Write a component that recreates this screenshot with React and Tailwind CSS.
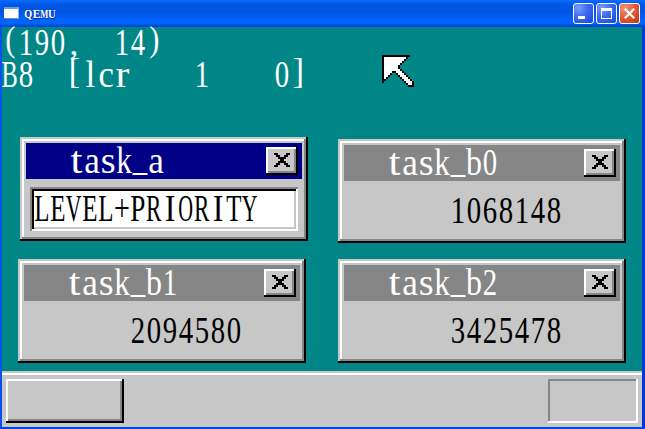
import React from "react";

// Horizontal stretch that fits each serif glyph into the 16px console cell.
const STRETCH = {
  "(": 0.95, ")": 0.95, "[": 1.05, "]": 1.05, ",": 1.1, "+": 0.88, _: 0.9,
  t: 1.35, a: 1.1, s: 1.2, k: 0.98, b: 1, l: 1.1, c: 1.08, r: 1.3,
  L: 0.78, E: 0.78, V: 0.68, P: 0.85, R: 0.72, I: 1, O: 0.64, T: 0.78, Y: 0.68, B: 0.76,
};

// Brackets and the underscore have a shorter body or a raised position.
const HEIGHT = { "(": 1.1, ")": 1.1, "[": 1.12, "]": 1.12, ",": 1 };
const SHIFT = { "(": -3, ")": -3, "[": -3, "]": -3, ",": 0, _: -2 };

function Mono({ text }) {
  return (
    <div className="flex h-8 whitespace-pre font-['Liberation_Serif',serif] text-[32px] leading-8">
      {[...text].map((ch, i) => (
        <span key={i} className="flex h-8 w-4 shrink-0 justify-center">
          <span
            className="block origin-[50%_27px]"
            style={{
              transform: `translateY(${SHIFT[ch] ?? 1}px) scale(${STRETCH[ch] ?? 0.9}, ${HEIGHT[ch] ?? 1.2})`,
            }}
          >
            {ch}
          </span>
        </span>
      ))}
    </div>
  );
}

function Bitmap({ rows, colors, className }) {
  return (
    <svg
      className={className}
      viewBox={`0 0 ${rows[0].length} ${rows.length}`}
      shapeRendering="crispEdges"
    >
      {rows.flatMap((row, y) =>
        [...row].map((c, x) =>
          colors[c] ? <rect key={`${x}-${y}`} x={x} y={y} width="1" height="1" fill={colors[c]} /> : null
        )
      )}
    </svg>
  );
}

const POINTER = [
  "**************..",
  "*OOOOOOOOOOO*...",
  "*OOOOOOOOOO*....",
  "*OOOOOOOOO*.....",
  "*OOOOOOOO*......",
  "*OOOOOOO*.......",
  "*OOOOOOO*.......",
  "*OOOOOOOO*......",
  "*OOOO**OOO*.....",
  "*OOO*..*OOO*....",
  "*OO*....*OOO*...",
  "*O*......*OOO*..",
  "**........*OOO*.",
  "*..........*OOO*",
  "............*OO*",
  ".............***",
];

const CROSS = [
  "@@....@@",
  ".@@..@@.",
  "..@@@@..",
  "...@@...",
  "..@@@@..",
  ".@@..@@.",
  "@@....@@",
];

function CloseButton() {
  return (
    <button className="flex h-7 w-8 items-start bg-[#c7c7c7] pt-[6px] pl-2 shadow-[inset_-2px_-2px_0_#000,inset_2px_2px_0_#fff,inset_-4px_-4px_0_#868686]">
      <Bitmap rows={CROSS} colors={{ "@": "#000" }} className="h-[14px] w-4 shrink-0" />
    </button>
  );
}

function TaskWindow({ title, active, place, children }) {
  return (
    <section
      className={`absolute h-[104px] w-72 bg-[#c7c7c7] p-[6px] shadow-[inset_-2px_-2px_0_#000,inset_2px_2px_0_#c7c7c7,inset_-4px_-4px_0_#868686,inset_4px_4px_0_#fff] ${place}`}
    >
      <header
        className={`flex h-9 justify-between pt-[2px] pr-1 pl-[42px] text-white ${active ? "bg-[#000086]" : "bg-[#868686]"}`}
      >
        <Mono text={title} />
        <div className="pt-[2px]">
          <CloseButton />
        </div>
      </header>
      {children}
    </section>
  );
}

function Count({ value }) {
  return (
    <div className="pt-[14px] pl-[106px] text-black">
      <Mono text={value} />
    </div>
  );
}

function FrameButton({ tone, children }) {
  return (
    <button className={`flex h-[21px] w-[21px] items-center justify-center rounded-[3px] border border-white ${tone}`}>
      {children}
    </button>
  );
}

const BLUE = "bg-[radial-gradient(circle_at_25%_20%,#7a9cf8_0%,#3c6af0_45%,#1746d8_100%)]";
const RED = "bg-[radial-gradient(circle_at_25%_20%,#f09478_0%,#e25a33_50%,#c2330c_100%)]";

export default function App() {
  return (
    <div className="flex h-[429px] w-[645px] flex-col overflow-hidden bg-[#0046ea]">
      <header className="flex h-[27px] shrink-0 items-start bg-[linear-gradient(to_bottom,#0a6cff_0px,#0058e6_4px,#0053e0_11px,#0060fa_19px,#0068ff_23px,#0048d8_26px,#003cc0_27px)] pt-[3px] pr-[5px] pl-1">
        <div className="mt-[4px] h-3 w-[15px] border-t-2 border-r border-b border-t-[#5f9fd0] border-r-[#8db0d8] border-b-[#6f8fc0] bg-white" />
        <h1 className="mt-[3px] ml-[5px] flex font-['Liberation_Serif',serif] text-[13.5px] leading-4 font-bold text-white [text-shadow:1px_1px_0_#0a2a90]">
          {[["Q", 0.76], ["E", 0.86], ["M", 0.64], ["U", 0.8]].map(([ch, sx]) => (
            <span key={ch} className="flex w-2 justify-center">
              <span className="block" style={{ transform: `scaleX(${sx})` }}>{ch}</span>
            </span>
          ))}
        </h1>
        <div className="ml-auto flex gap-[2px]">
          <FrameButton tone={BLUE}>
            <span className="mt-2 mr-1 h-[3px] w-[7px] bg-white" />
          </FrameButton>
          <FrameButton tone={BLUE}>
            <span className="h-[11px] w-[11px] border border-t-[3px] border-white" />
          </FrameButton>
          <FrameButton tone={RED}>
            <svg className="h-[11px] w-[11px]" viewBox="0 0 11 11" stroke="#fff" strokeWidth="2.2">
              <path d="M0.7 0.7 10.3 10.3M10.3 0.7 0.7 10.3" />
            </svg>
          </FrameButton>
        </div>
      </header>

      <div className="flex h-[402px] border-r-[3px] border-b-2 border-l-2 border-t-0 border-r-[#0038d4] border-b-[#0046f0] border-l-[#0a50f0]">
        <main className="relative flex w-[640px] flex-col bg-[#008686]">
          <div className="h-[344px] text-white">
            <Mono text="(190,  14)" />
            <Mono text="B8  [lcr    1    0]" />
          </div>

          <TaskWindow title="task_a" active place="left-[18px] top-[110px]">
            <div className="mt-2 ml-1 h-11 w-[268px] bg-white pt-[6px] pl-1 text-black shadow-[inset_2px_2px_0_#868686,inset_-2px_-2px_0_#fff,inset_4px_4px_0_#000,inset_-4px_-4px_0_#c7c7c7]">
              <Mono text="LEVEL+PRIORITY" />
            </div>
          </TaskWindow>
          <TaskWindow title="task_b0" place="left-[336px] top-[112px]">
            <Count value="1068148" />
          </TaskWindow>
          <TaskWindow title="task_b1" place="left-4 top-[232px]">
            <Count value="2094580" />
          </TaskWindow>
          <TaskWindow title="task_b2" place="left-[336px] top-[232px]">
            <Count value="3425478" />
          </TaskWindow>

          <footer className="flex h-14 justify-between bg-[#c7c7c7] pt-2 pr-1 pl-1 shadow-[inset_0_2px_0_#c7c7c7,inset_0_4px_0_#fff]">
            <button className="h-11 w-[118px] shadow-[inset_-2px_-2px_0_#000,inset_2px_2px_0_#fff,inset_-4px_-4px_0_#868686]" />
            <div className="h-11 w-[90px] shadow-[inset_-2px_-2px_0_#fff,inset_2px_2px_0_#868686]" />
          </footer>

          <Bitmap
            rows={POINTER}
            colors={{ "*": "#000", O: "#fff" }}
            className="absolute top-7 left-[380px] h-8 w-8"
          />
        </main>
      </div>
    </div>
  );
}
